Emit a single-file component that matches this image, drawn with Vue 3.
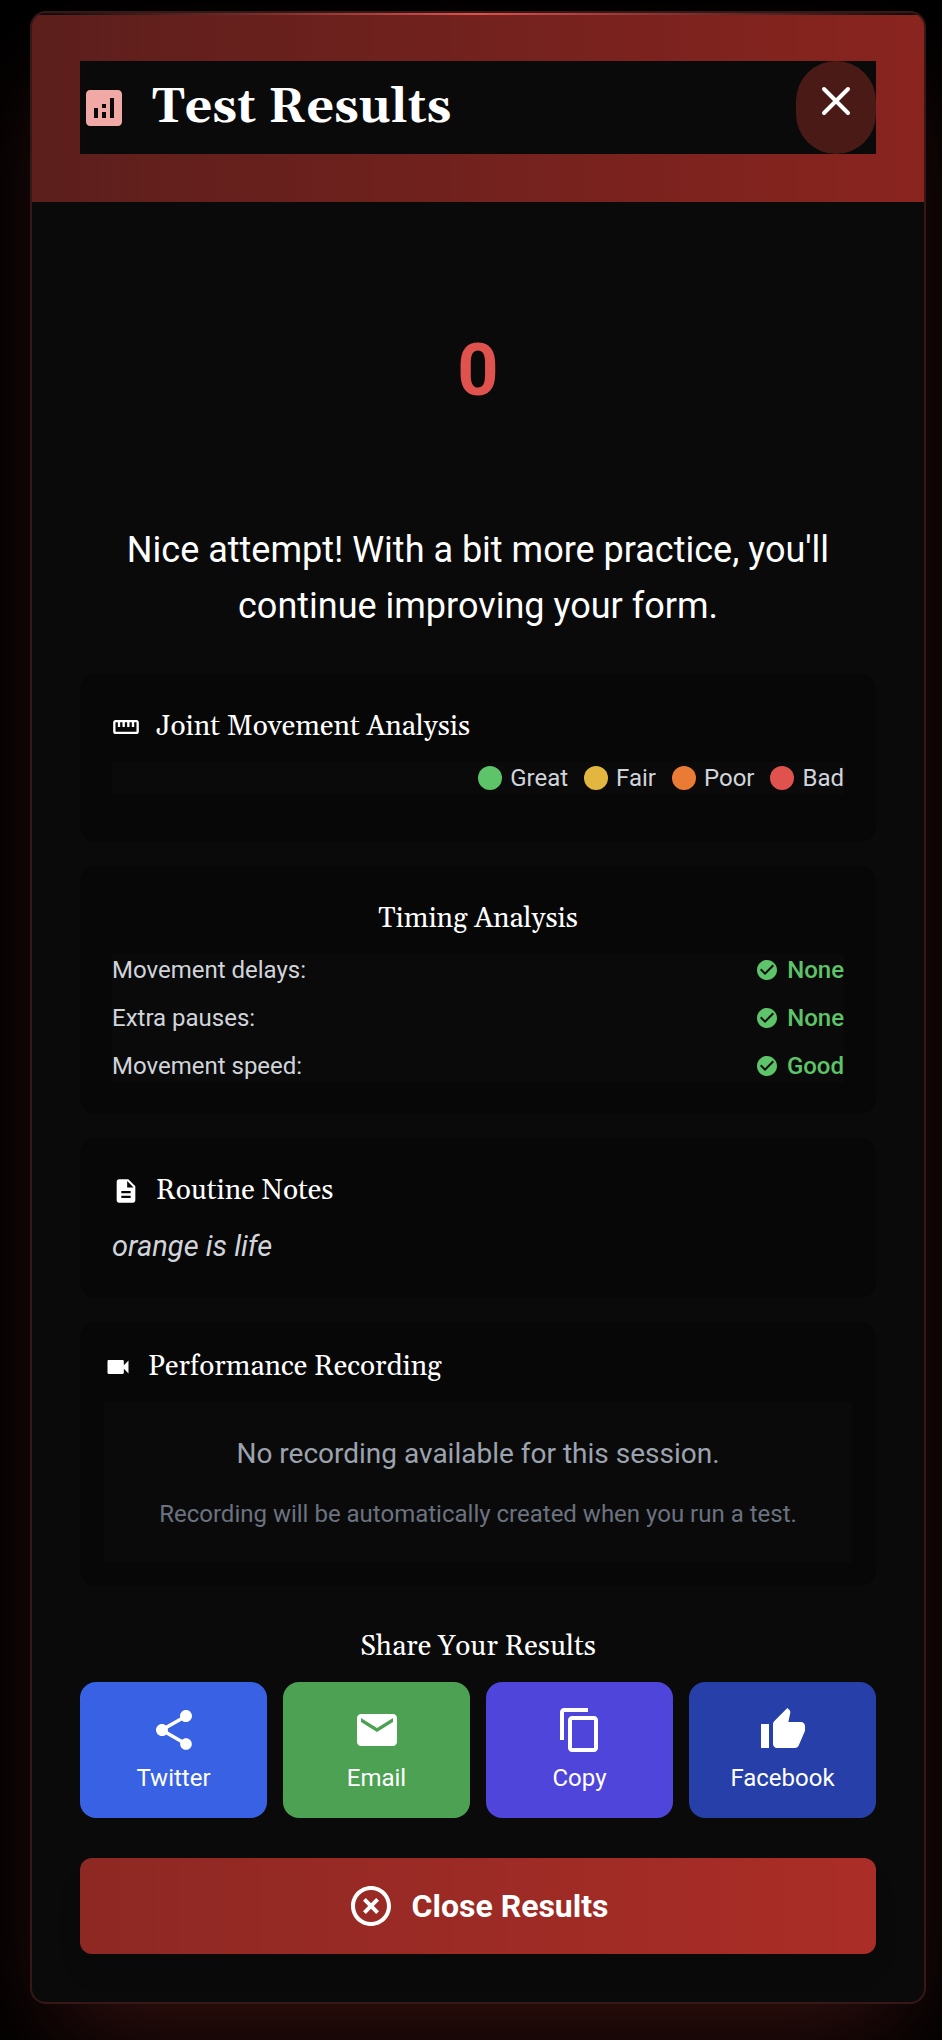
<script setup>
const legend = [
  { label: 'Great', tone: 'great' },
  { label: 'Fair', tone: 'fair' },
  { label: 'Poor', tone: 'poor' },
  { label: 'Bad', tone: 'bad' },
]

const timing = [
  { label: 'Movement delays:', value: 'None' },
  { label: 'Extra pauses:', value: 'None' },
  { label: 'Movement speed:', value: 'Good' },
]

const shares = [
  {
    label: 'Twitter',
    tone: 'twitter',
    path: 'M18 16.08c-.76 0-1.44.3-1.96.77L8.91 12.7c.05-.23.09-.46.09-.7s-.04-.47-.09-.7l7.05-4.11c.54.5 1.25.81 2.04.81 1.66 0 3-1.34 3-3s-1.34-3-3-3-3 1.34-3 3c0 .24.04.47.09.7L8.04 9.81C7.5 9.31 6.79 9 6 9c-1.66 0-3 1.34-3 3s1.34 3 3 3c.79 0 1.5-.31 2.04-.81l7.12 4.16c-.05.21-.08.43-.08.65 0 1.61 1.31 2.92 2.92 2.92s2.92-1.31 2.92-2.92-1.31-2.92-2.92-2.92z',
  },
  {
    label: 'Email',
    tone: 'email',
    path: 'M20 4H4c-1.1 0-1.99.9-1.99 2L2 18c0 1.1.9 2 2 2h16c1.1 0 2-.9 2-2V6c0-1.1-.9-2-2-2zm0 4l-8 5-8-5V6l8 5 8-5v2z',
  },
  {
    label: 'Copy',
    tone: 'copy',
    path: 'M16 1H4c-1.1 0-2 .9-2 2v14h2V3h12V1zm3 4H8c-1.1 0-2 .9-2 2v14c0 1.1.9 2 2 2h11c1.1 0 2-.9 2-2V7c0-1.1-.9-2-2-2zm0 16H8V7h11v14z',
  },
  {
    label: 'Facebook',
    tone: 'facebook',
    path: 'M1 21h4V9H1v12zm22-11c0-1.1-.9-2-2-2h-6.31l.95-4.57.03-.32c0-.41-.17-.79-.44-1.06L14.17 1 7.59 7.59C7.22 7.95 7 8.45 7 9v10c0 1.1.9 2 2 2h9c.83 0 1.54-.5 1.84-1.22l3.02-7.05c.09-.23.14-.47.14-.73v-2z',
  },
]
</script>

<template>
  <main class="page">
    <section class="dialog" aria-labelledby="results-title">
      <div class="accent"></div>
      <header class="header">
        <div class="header-row">
          <div class="title-group">
            <svg class="icon-lg title-icon" viewBox="0 0 24 24" aria-hidden="true">
              <path d="M19 3H5c-1.1 0-2 .9-2 2v14c0 1.1.9 2 2 2h14c1.1 0 2-.9 2-2V5c0-1.1-.9-2-2-2zM9 17H7v-5h2v5zm4 0h-2v-3h2v3zm0-5h-2v-2h2v2zm4 5h-2V7h2v10z" />
            </svg>
            <h1 id="results-title" class="title">Test Results</h1>
          </div>
          <button class="close-icon" type="button" aria-label="Close">
            <svg class="icon-lg stroked" viewBox="0 0 24 24" aria-hidden="true">
              <path d="M6 18L18 6M6 6l12 12" />
            </svg>
          </button>
        </div>
      </header>

      <div class="body">
        <div class="score">0</div>
        <p class="message">Nice attempt! With a bit more practice, you'll continue improving your form.</p>

        <div class="cards">
          <section class="card">
            <h2 class="heading">
              <svg class="icon-sm" viewBox="0 0 24 24" aria-hidden="true">
                <path d="M21 6H3c-1.1 0-2 .9-2 2v8c0 1.1.9 2 2 2h18c1.1 0 2-.9 2-2V8c0-1.1-.9-2-2-2zm0 10H3V8h2v4h2V8h2v4h2V8h2v4h2V8h2v4h2V8h2v8z" />
              </svg>
              Joint Movement Analysis
            </h2>
            <ul class="legend">
              <li v-for="item in legend" :key="item.label" class="legend-item">
                <span class="dot" :class="item.tone"></span>{{ item.label }}
              </li>
            </ul>
          </section>

          <section class="card">
            <h2 class="heading centered">Timing Analysis</h2>
            <dl class="timing">
              <div v-for="row in timing" :key="row.label" class="timing-row">
                <dt>{{ row.label }}</dt>
                <dd>
                  <svg class="icon-xs" viewBox="0 0 24 24" aria-hidden="true">
                    <path d="M12 2C6.48 2 2 6.48 2 12s4.48 10 10 10 10-4.48 10-10S17.52 2 12 2zm-2 15l-5-5 1.41-1.41L10 14.17l7.59-7.59L19 8l-9 9z" />
                  </svg>
                  {{ row.value }}
                </dd>
              </div>
            </dl>
          </section>

          <section class="card">
            <h2 class="heading">
              <svg class="icon-sm" viewBox="0 0 24 24" aria-hidden="true">
                <path d="M14 2H6c-1.1 0-1.99.9-1.99 2L4 20c0 1.1.89 2 1.99 2H18c1.1 0 2-.9 2-2V8l-6-6zm2 16H8v-2h8v2zm0-4H8v-2h8v2zm-3-5V3.5L18.5 9H13z" />
              </svg>
              Routine Notes
            </h2>
            <p class="notes">orange is life</p>
          </section>

          <section class="card tight">
            <h2 class="heading">
              <svg class="icon-sm" viewBox="0 0 24 24" aria-hidden="true">
                <path d="M17 10.5V7c0-.55-.45-1-1-1H4c-.55 0-1 .45-1 1v10c0 .55.45 1 1 1h12c.55 0 1-.45 1-1v-3.500l4 4v-11l-4 4z" />
              </svg>
              Performance Recording
            </h2>
            <div class="recording">
              <p class="recording-main">No recording available for this session.</p>
              <p class="recording-hint">Recording will be automatically created when you run a test.</p>
            </div>
          </section>
        </div>

        <section class="share">
          <h2 class="heading centered">Share Your Results</h2>
          <div class="share-grid">
            <button v-for="s in shares" :key="s.label" type="button" class="share-button" :class="s.tone">
              <svg class="icon-lg" viewBox="0 0 24 24" aria-hidden="true"><path :d="s.path" /></svg>
              <span>{{ s.label }}</span>
            </button>
          </div>
        </section>

        <button class="close-button" type="button">
          <svg class="icon-lg" viewBox="0 0 24 24" aria-hidden="true">
            <path d="M14.59 8L12 10.59 9.41 8 8 9.410 10.590 12 8 14.590 9.410 16 12 13.410 14.590 16 16 14.590 13.410 12 16 9.410 14.590 8zM12 2C6.470 2 2 6.470 2 12s4.470 10 10 10 10-4.470 10-10S17.530 2 12 2zm0 18c-4.410 0-8-3.590-8-8s3.590-8 8-8 8 3.590 8 8-3.590 8-8 8z" />
          </svg>
          Close Results
        </button>
      </div>
    </section>
  </main>
</template>

<style>
html,
body {
  margin: 0;
  background: #000;
}
</style>

<style scoped>
.page {
  padding: 11px 16px 36px 30px;
  overflow: hidden;
  background: #000;
  color: #fff;
  font-family: Roboto, "Liberation Sans", sans-serif;
}

h1,
h2,
p,
ul,
dl,
dd {
  margin: 0;
  padding: 0;
}

button {
  border: 0;
  color: inherit;
  font-family: inherit;
  cursor: pointer;
}

svg {
  display: block;
  flex: none;
  fill: currentColor;
}

.icon-lg {
  width: 48px;
  height: 48px;
}

.icon-sm {
  width: 28px;
  height: 28px;
}

.icon-xs {
  width: 24px;
  height: 24px;
}

.stroked {
  fill: none;
  stroke: currentColor;
  stroke-width: 2;
  stroke-linecap: round;
}

.dialog {
  overflow: hidden;
  border: 2px solid rgba(224, 82, 77, 0.2);
  border-radius: 16px;
  background: #0a0a0a;
  box-shadow: 0 50px 100px -24px rgba(180, 56, 52, 0.3);
}

.accent {
  height: 2px;
  background: linear-gradient(90deg, transparent, #e0524d, transparent);
}

.header {
  padding: 46px 48px 48px;
  background: linear-gradient(90deg, #5c1f1c, #8a241f);
}

.header-row {
  display: flex;
  justify-content: space-between;
  background: #0a0a0a;
}

.title-group {
  display: flex;
  align-items: center;
  gap: 24px;
}

.title-icon {
  color: #f1a9a6;
}

.title {
  font: 700 48px/64px Georgia, Gelasio, "Liberation Serif", serif;
}

.close-icon {
  display: flex;
  padding: 16px 16px 29px;
  border-radius: 40px;
  background: #4a1a17;
}

.body {
  padding: 48px;
}

.score {
  display: flex;
  align-items: center;
  justify-content: center;
  height: 240px;
  margin-bottom: 32px;
  color: #e0524d;
  font-size: 72px;
  font-weight: 700;
}

.message {
  margin-bottom: 40px;
  font-size: 36px;
  line-height: 56px;
  text-align: center;
}

.cards {
  display: grid;
  gap: 24px;
}

.card {
  padding: 32px;
  border-radius: 16px;
  background: #070707;
}

.card.tight {
  padding: 24px;
}

.heading {
  display: flex;
  align-items: center;
  gap: 16px;
  margin-bottom: 14px;
  font: 400 28px/42px Georgia, Gelasio, "Liberation Serif", serif;
}

.heading.centered {
  justify-content: center;
}

.legend {
  display: flex;
  justify-content: flex-end;
  gap: 16px;
  margin-bottom: 16px;
  background: #0a0a0a;
  color: #d1d5db;
  font-size: 24px;
  line-height: 32px;
  list-style: none;
}

.legend-item {
  display: flex;
  align-items: center;
  gap: 8px;
}

.dot {
  width: 24px;
  height: 24px;
  border-radius: 50%;
}

.great {
  background: #5dc469;
}

.fair {
  background: #e3b73f;
}

.poor {
  background: #e97b35;
}

.bad {
  background: #e0524d;
}

.timing {
  display: grid;
  gap: 16px;
  background: #0a0a0a;
  font-size: 24px;
  line-height: 32px;
}

.timing-row {
  display: flex;
  justify-content: space-between;
  color: #d1d5db;
}

.timing-row dd {
  display: flex;
  align-items: center;
  gap: 8px;
  color: #5dc469;
  font-weight: 500;
}

.notes {
  color: #d1d5db;
  font-size: 29px;
  font-style: italic;
  line-height: 40px;
}

.recording {
  padding: 32px;
  background: #0a0a0a;
  text-align: center;
}

.recording-main {
  margin-bottom: 24px;
  color: #9ca3af;
  font-size: 28px;
  line-height: 40px;
}

.recording-hint {
  color: #6b7280;
  font-size: 24px;
  line-height: 32px;
}

.share {
  margin: 40px 0;
}

.share-grid {
  display: grid;
  grid-template-columns: repeat(4, 1fr);
  gap: 16px;
}

.share-button {
  display: flex;
  flex-direction: column;
  align-items: center;
  gap: 8px;
  padding: 24px;
  border-radius: 16px;
  font-size: 24px;
  line-height: 32px;
}

.twitter {
  background: #3862e3;
}

.email {
  background: #4da153;
}

.copy {
  background: #4f45db;
}

.facebook {
  background: #263fa9;
}

.close-button {
  display: flex;
  align-items: center;
  justify-content: center;
  gap: 16px;
  width: 100%;
  padding: 24px;
  border-radius: 12px;
  background: linear-gradient(90deg, #8e2823, #ab2d27);
  box-shadow: 0 20px 30px -6px rgba(0, 0, 0, 0.1);
  font-size: 32px;
  font-weight: 700;
  line-height: 48px;
}
</style>
